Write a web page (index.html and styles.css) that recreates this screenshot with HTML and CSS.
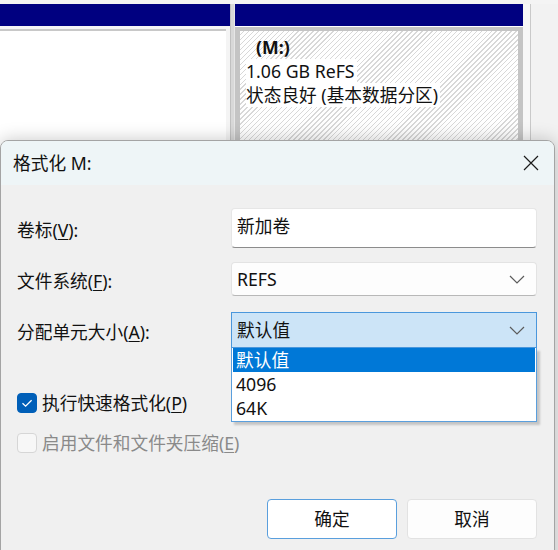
FILE: index.html
```html
<!DOCTYPE html>
<html lang="zh-CN">
<head>
<meta charset="utf-8">
<title>格式化 M:</title>
<link rel="stylesheet" href="styles.css">
</head>
<body>
<div class="desk">
  <div class="vol-col left-col">
    <div class="vol-head"></div>
    <div class="vol-plain"></div>
  </div>
  <div class="splitter"></div>
  <div class="vol-col right-col">
    <div class="vol-head"></div>
    <div class="vol-frame">
      <div class="hatch">
        <span class="vline vname">(M:)</span>
        <span class="vline">1.06 GB ReFS</span>
        <span class="vline">状态良好 (基本数据分区)</span>
      </div>
    </div>
  </div>
  <div class="scrollcol"></div>
</div>

<div class="dialog">
  <div class="titlebar">
    <span class="title">格式化 M:</span>
    <svg class="close" width="16" height="16" viewBox="0 0 16 16"><path d="M1 1L15 15M15 1L1 15" stroke="#1b1b1b" stroke-width="1.2" fill="none"/></svg>
  </div>
  <div class="dlg-body">
    <div class="field f1">
      <span class="label">卷标(<u>V</u>):</span>
      <div class="textbox">新加卷</div>
    </div>
    <div class="field f2">
      <span class="label">文件系统(<u>F</u>):</span>
      <div class="combo">REFS<svg class="chev" width="16" height="9" viewBox="0 0 16 9"><path d="M1 1L8 8L15 1" stroke="#5c5c5c" stroke-width="1.2" fill="none"/></svg></div>
    </div>
    <div class="field f3">
      <span class="label">分配单元大小(<u>A</u>):</span>
      <div class="combo-wrap">
        <div class="combo open">默认值<svg class="chev" width="16" height="9" viewBox="0 0 16 9"><path d="M1 1L8 8L15 1" stroke="#5c5c5c" stroke-width="1.2" fill="none"/></svg></div>
        <ul class="dropdown">
          <li class="sel">默认值</li>
          <li>4096</li>
          <li>64K</li>
        </ul>
      </div>
    </div>
    <div class="check c1">
      <span class="box on"><svg width="20" height="20" viewBox="0 0 20 20"><path d="M5.5 10.2L8.6 13.2L14.6 7.2" stroke="#fff" stroke-width="1.3" fill="none"/></svg></span>
      <span>执行快速格式化(<u>P</u>)</span>
    </div>
    <div class="check c2 disabled">
      <span class="box"></span>
      <span>启用文件和文件夹压缩(<u>E</u>)</span>
    </div>
    <div class="buttons">
      <button class="btn primary">确定</button>
      <button class="btn">取消</button>
    </div>
  </div>
</div>
</body>
</html>
```

FILE: styles.css
```css
* { box-sizing: border-box; }
html, body { margin: 0; padding: 0; }
body {
  width: 558px;
  height: 550px;
  overflow: hidden;
  position: relative;
  background: #f0f0f0;
  font-family: "Noto Sans", "Noto Sans CJK SC", sans-serif;
  font-size: 17.7px;
  color: #111;
}

/* background: disk management view */
.desk {
  display: flex;
  padding-top: 4px;
  height: 160px;
  background: #f4f4f4;
}
.vol-col { display: flex; flex-direction: column; }
.left-col { width: 230px; }
.right-col { width: 288px; }
.vol-head { height: 22px; background: #000080; flex: none; }
.vol-plain {
  flex: 1;
  margin-top: 3px;
  margin-right: 4px;
  background: #fff;
  border-top: 2px solid #c8c8c8;
}
.splitter {
  width: 5px;
  background: #d8d8d8;
  border-left: 1px solid #c0c0c0;
  border-right: 1px solid #e6e6e6;
}
.vol-frame {
  flex: 1;
  background: #fff;
  padding-top: 1px;
}
.hatch {
  height: 100%;
  border: 5px solid #c4c4c4;
  border-top-width: 4px;
  background: repeating-linear-gradient(135deg, #ffffff 0, #ffffff 2.5px, #d8d8d8 2.5px, #d8d8d8 3.5px);
  padding: 4px 0 0 6px;
  display: flex;
  flex-direction: column;
  align-items: flex-start;
}
.vline {
  line-height: 24px;
  background: #fff;
  padding-right: 2px;
}
.vname { font-weight: bold; padding-left: 10px; background: transparent; }
.scrollcol {
  flex: 1;
  background: #f2f2f2;
  border-left: 7px solid #f7f7f7;
  box-shadow: inset 1px 0 0 #c9c9c9;
}

/* dialog */
.dialog {
  position: absolute;
  left: 0;
  top: 140px;
  width: 555px;
  height: 430px;
  background: #f0f0f0;
  border: 1px solid #a4a4a4;
  border-radius: 8px 8px 0 0;
  box-shadow: 0 0 18px rgba(0,0,0,0.22);
}
.titlebar {
  height: 44px;
  background: #eef5f7;
  border-radius: 7px 7px 0 0;
  display: flex;
  align-items: center;
  justify-content: space-between;
  padding: 0 15px 0 12px;
}
.title { line-height: 24px; }
.close { display: block; }

.dlg-body {
  padding: 0 17px 0 16px;
  display: flex;
  flex-direction: column;
}
.field {
  display: flex;
  align-items: center;
}
.label {
  width: 214px;
  flex: none;
  line-height: 24px;
  padding-top: 3px;
}
u { text-decoration-thickness: 1px; text-underline-offset: 2px; }
.f1 { margin-top: 23px; height: 40px; }
.f2 { margin-top: 14px; height: 34px; }
.f3 { margin-top: 16px; height: 36px; }

.textbox {
  width: 306px;
  height: 40px;
  background: #fff;
  border: 1px solid #e6e6e6;
  border-bottom: 1px solid #8c8c8c;
  border-radius: 4px;
  padding: 0 0 4px 5px;
  display: flex;
  align-items: center;
  line-height: 24px;
}
.combo-wrap { position: relative; width: 306px; height: 36px; }
.combo {
  width: 306px;
  height: 34px;
  background: #fdfdfd;
  border: 1px solid #e3e3e3;
  border-bottom-color: #b8b8b8;
  border-radius: 4px;
  display: flex;
  align-items: center;
  justify-content: space-between;
  padding: 0 11px 0 5px;
  line-height: 24px;
}
.combo.open {
  height: 36px;
  background: #cce4f7;
  border: 1px solid #4a97dc;
  border-radius: 0;
}
.chev { display: block; }
.dropdown {
  position: absolute;
  left: 0;
  top: 36px;
  width: 306px;
  margin: 0;
  padding: 0 1px 1px 1px;
  list-style: none;
  background: #fff;
  border: 1px solid #5a9fdd;
  border-top: none;
  box-shadow: 3px 3px 2px rgba(0,0,0,0.18);
}
.dropdown li {
  height: 24px;
  line-height: 24px;
  padding-left: 3px;
}
.dropdown li.sel { background: #0078d7; color: #fff; }

.check {
  display: flex;
  align-items: center;
  gap: 5px;
  height: 20px;
  line-height: 24px;
}
.c1 { margin-top: 45px; }
.c2 { margin-top: 20px; }
.box {
  width: 20px;
  height: 20px;
  flex: none;
  border-radius: 4px;
  border: 1px solid #d6d6d6;
  background: #f7f7f7;
  display: block;
}
.box svg { display: block; margin: -1px; }
.box.on { background: #005fb8; border-color: #005fb8; }
.disabled { color: #8a8a8a; }

.buttons {
  margin-top: 46px;
  display: flex;
  justify-content: flex-end;
  gap: 10px;
}
.btn {
  width: 130px;
  height: 40px;
  font: inherit;
  color: #111;
  background: #fdfdfd;
  border: 1px solid #e2e2e2;
  border-radius: 4px;
  padding: 0;
  line-height: 24px;
}
.btn.primary { background: #fff; border-color: #5a9fdd; }
```
